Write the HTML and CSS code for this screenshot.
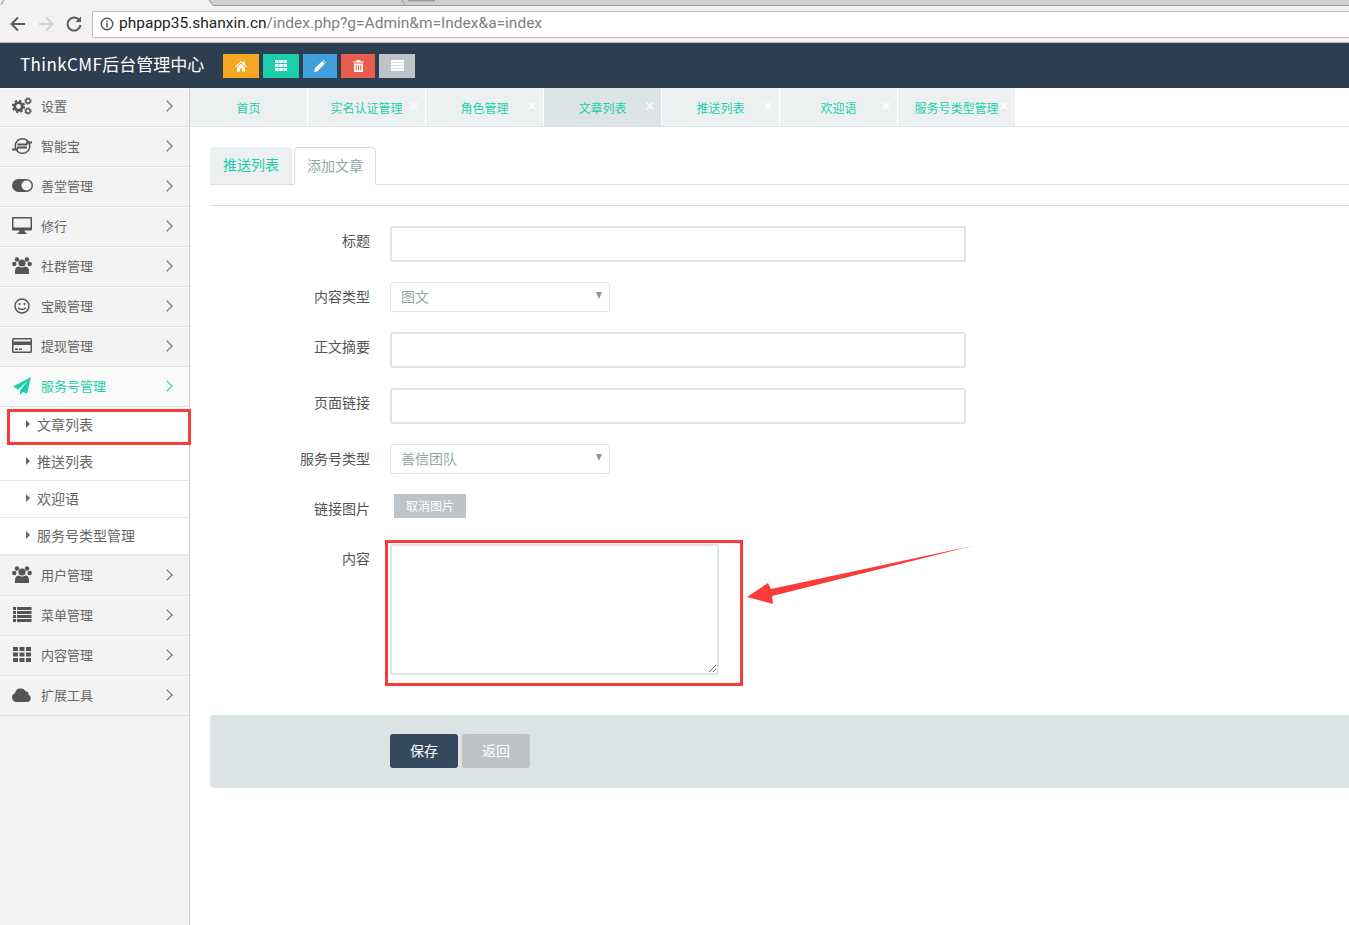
FILE: index.html
```html
<!DOCTYPE html>
<html lang="zh-CN">
<head>
    <meta charset="UTF-8">
    <title>ThinkCMF后台管理中心</title>
    <link rel="stylesheet" href="styles.css">
</head>
<body>
    <!-- Browser toolbar -->
    <div class="chrome">
        <svg class="chrome-tabs" width="1349" height="6" viewBox="0 0 1349 6">
            <path d="M209 0h1140v5H213z" fill="#cfcfcf"/>
            <path d="M209 0l4 5.500h1136M402 0l3 5.500" fill="none" stroke="#9a9a9a"/>
            <path d="M408 0h27v1.500h-27z" fill="#9a9a9a"/>
            <path d="M0 4 3 0h2L2 5z" fill="#bbb"/>
        </svg>
        <div class="chrome-bar">
            <svg class="chrome-btn" width="18" height="18" viewBox="0 0 18 18"><path d="M16 9H3M9 2.500 2.500 9 9 15.500" fill="none" stroke="#5a5a5a" stroke-width="2"/></svg>
            <svg class="chrome-btn" width="18" height="18" viewBox="0 0 18 18"><path d="M2 9h13M9 2.500 15.500 9 9 15.500" fill="none" stroke="#d2d2d2" stroke-width="2"/></svg>
            <svg class="chrome-btn" width="18" height="18" viewBox="0 0 18 18"><path d="M14.500 5.500A6.500 6.500 0 1 0 15.500 10" fill="none" stroke="#5a5a5a" stroke-width="2"/><path d="M16 1.500V7h-5.500z" fill="#5a5a5a"/></svg>
            <div class="url-box">
                <svg width="14" height="14" viewBox="0 0 14 14"><circle cx="7" cy="7" r="5.800" fill="none" stroke="#555" stroke-width="1.400"/><path d="M7 6v4.500M7 3.500v1.500" stroke="#555" stroke-width="1.500"/></svg>
                <span class="url-host">phpapp35.shanxin.cn</span><span class="url-path">/index.php?g=Admin&amp;m=Index&amp;a=index</span>
            </div>
        </div>
    </div>

    <!-- Top navbar -->
    <div class="navbar">
        <div class="brand"><span class="brand-latin">ThinkCMF</span>后台管理中心</div>
        <div class="quick-btns">
            <a class="quick orange"><svg width="12" height="12" viewBox="0 0 12 12"><path d="M6 1 0 6.500l.7.800L6 2.600l5.300 4.700.7-.8-2-1.800V1.500H8.500v1.300zM2 7.500V11.500h3v-3h2v3h3V7.500L6 3.800z" fill="#fff"/></svg></a>
            <a class="quick green"><svg width="12" height="11" viewBox="0 0 12 11"><path d="M0 0h3.500v3H0zM4.200 0h3.600v3H4.200zM8.500 0H12v3H8.500zM0 4h3.500v3H0zM4.200 4h3.600v3H4.200zM8.500 4H12v3H8.500zM0 8h3.500v3H0zM4.200 8h3.600v3H4.200zM8.500 8H12v3H8.500z" fill="#fff"/></svg></a>
            <a class="quick blue"><svg width="12" height="12" viewBox="0 0 12 12"><path d="M0 12l.8-3.500L8 1.300l2.700 2.700L3.500 11.200zM8.800.6l.6-.6 2.600 2.600-.6.700z" fill="#fff"/></svg></a>
            <a class="quick red"><svg width="11" height="12" viewBox="0 0 11 12"><path d="M4 0h3l1 1.500h3v1H0v-1h3zM1 3.500h9V12H1zM2.800 5v5.500h1V5zM5 5v5.500h1V5zM7.200 5v5.500h1V5z" fill="#fff" fill-rule="evenodd"/></svg></a>
            <a class="quick gray"><svg width="13" height="11" viewBox="0 0 13 11"><path d="M0 0h13v2.400H0zM0 3h13v2.400H0zM0 6h13v2.200H0zM0 8.800h13V11H0z" fill="#fff"/></svg></a>
        </div>
    </div>

    <div class="layout">
        <!-- Sidebar menu -->
        <div class="sidebar">
            <div class="menu-item first">
                <svg class="menu-icon" width="20" height="18" viewBox="0 0 20 18"><circle cx="6.500" cy="9.500" r="3.800" fill="none" stroke="#555" stroke-width="2.800"/><circle cx="6.500" cy="9.500" r="5.800" fill="none" stroke="#555" stroke-width="1.800" stroke-dasharray="2.300 2.250"/><circle cx="16" cy="4" r="2.200" fill="none" stroke="#555" stroke-width="1.500"/><circle cx="16" cy="4" r="3.300" fill="none" stroke="#555" stroke-width=".9" stroke-dasharray="1.300 1.300"/><circle cx="16" cy="14" r="2.200" fill="none" stroke="#555" stroke-width="1.500"/><circle cx="16" cy="14" r="3.300" fill="none" stroke="#555" stroke-width=".9" stroke-dasharray="1.300 1.300"/></svg>
                <span>设置</span><i class="chev"></i>
            </div>
            <div class="menu-item">
                <svg class="menu-icon" width="20" height="18" viewBox="0 0 20 18"><circle cx="10.500" cy="9" r="7.300" fill="none" stroke="#555" stroke-width="1.500"/><path d="M0 12.500h6M14 5.500h6M5.500 7.500h10M5 10.500h10" stroke="#555" stroke-width="1.800"/></svg>
                <span>智能宝</span><i class="chev"></i>
            </div>
            <div class="menu-item">
                <svg class="menu-icon toggle" width="21" height="13" viewBox="0 0 21 13"><rect width="21" height="13" rx="6.500" fill="#555"/><circle cx="14.500" cy="6.500" r="5" fill="#f3f3f3"/></svg>
                <span>善堂管理</span><i class="chev"></i>
            </div>
            <div class="menu-item">
                <svg class="menu-icon" width="20" height="17" viewBox="0 0 20 17"><path d="M1 0h18a1 1 0 0 1 1 1v11.500a1 1 0 0 1-1 1h-6.500l.5 2h1.500v1.500h-9V15.500H7l.5-2H1a1 1 0 0 1-1-1V1a1 1 0 0 1 1-1zM1.500 1.500v9h17v-9z" fill="#555" fill-rule="evenodd"/></svg>
                <span>修行</span><i class="chev"></i>
            </div>
            <div class="menu-item">
                <svg class="menu-icon" width="20" height="17" viewBox="0 0 20 17"><circle cx="10" cy="6" r="3.600" fill="#555"/><circle cx="5" cy="2.500" r="2.200" fill="#555"/><circle cx="15" cy="2.500" r="2.200" fill="#555"/><circle cx="2.300" cy="7" r="2.200" fill="#555"/><circle cx="17.700" cy="7" r="2.200" fill="#555"/><path d="M3 17v-3q0-4 3.500-4.500 3.500 2 7 0Q17 10 17 14v3z" fill="#555"/></svg>
                <span>社群管理</span><i class="chev"></i>
            </div>
            <div class="menu-item">
                <svg class="menu-icon" width="20" height="16" viewBox="0 0 20 16"><circle cx="10" cy="8" r="7" fill="none" stroke="#555" stroke-width="1.500"/><circle cx="7.500" cy="6" r="1.100" fill="#555"/><circle cx="12.500" cy="6" r="1.100" fill="#555"/><path d="M6 9.800q4 3.400 8 0" fill="none" stroke="#555" stroke-width="1.300"/></svg>
                <span>宝殿管理</span><i class="chev"></i>
            </div>
            <div class="menu-item">
                <svg class="menu-icon" width="20" height="15" viewBox="0 0 20 15"><path d="M1.500 0h17A1.500 1.500 0 0 1 20 1.500v12a1.500 1.500 0 0 1-1.500 1.500h-17A1.500 1.500 0 0 1 0 13.500v-12A1.500 1.500 0 0 1 1.500 0zM1.500 1.500V3.500h17V1.500zM1.500 7v6.500h17V7zM3 10.500h3V12H3zM7 10.500h3V12H7z" fill="#555" fill-rule="evenodd"/></svg>
                <span>提现管理</span><i class="chev"></i>
            </div>
            <div class="menu-item active">
                <svg class="menu-icon" width="20" height="18" viewBox="0 0 20 18"><path d="M19 0 1 9.500l5 3L15.500 4 8 13.500 8 18l3-3 4 1.800z" fill="#1ccfab"/></svg>
                <span>服务号管理</span><i class="chev"></i>
            </div>
            <div class="sub-item"><i class="caret"></i>文章列表</div>
            <div class="sub-item"><i class="caret"></i>推送列表</div>
            <div class="sub-item"><i class="caret"></i>欢迎语</div>
            <div class="sub-item last"><i class="caret"></i>服务号类型管理</div>
            <div class="menu-item">
                <svg class="menu-icon" width="20" height="17" viewBox="0 0 20 17"><circle cx="10" cy="6" r="3.600" fill="#555"/><circle cx="5" cy="2.500" r="2.200" fill="#555"/><circle cx="15" cy="2.500" r="2.200" fill="#555"/><circle cx="2.300" cy="7" r="2.200" fill="#555"/><circle cx="17.700" cy="7" r="2.200" fill="#555"/><path d="M3 17v-3q0-4 3.500-4.500 3.500 2 7 0Q17 10 17 14v3z" fill="#555"/></svg>
                <span>用户管理</span><i class="chev"></i>
            </div>
            <div class="menu-item">
                <svg class="menu-icon" width="20" height="15" viewBox="0 0 20 15"><path d="M1 0h3v3H1zM5 0h14.500v3H5zM1 4h3v3H1zM5 4h14.500v3H5zM1 8h3v3H1zM5 8h14.500v3H5zM1 12h3v3H1zM5 12h14.500v3H5z" fill="#555"/></svg>
                <span>菜单管理</span><i class="chev"></i>
            </div>
            <div class="menu-item">
                <svg class="menu-icon" width="20" height="15" viewBox="0 0 20 15"><path d="M1 0h5v4H1zM7.500 0h5v4h-5zM14 0h5v4h-5zM1 5.500h5v4H1zM7.500 5.500h5v4h-5zM14 5.500h5v4h-5zM1 11h5v4H1zM7.500 11h5v4h-5zM14 11h5v4h-5z" fill="#555"/></svg>
                <span>内容管理</span><i class="chev"></i>
            </div>
            <div class="menu-item">
                <svg class="menu-icon" width="20" height="15" viewBox="0 0 20 15"><path d="M4.500 15A4.500 4.500 0 0 1 3 6.300 5.800 5.800 0 0 1 13.800 4.400 3 3 0 0 1 16.500 7.800 3.800 3.800 0 0 1 15.800 15z" fill="#555"/></svg>
                <span>扩展工具</span><i class="chev"></i>
            </div>
        </div>

        <!-- Main content -->
        <div class="main">
            <div class="page-tabs">
                <div class="page-tab">首页</div>
                <div class="page-tab">实名认证管理<b class="close">×</b></div>
                <div class="page-tab">角色管理<b class="close">×</b></div>
                <div class="page-tab current">文章列表<b class="close">×</b></div>
                <div class="page-tab">推送列表<b class="close">×</b></div>
                <div class="page-tab">欢迎语<b class="close">×</b></div>
                <div class="page-tab">服务号类型管理<b class="close">×</b></div>
            </div>

            <div class="content">
                <div class="nav-tabs">
                    <div class="nav-tab">推送列表</div>
                    <div class="nav-tab selected">添加文章</div>
                </div>
                <hr class="divider">

                <div class="form-row">
                    <label>标题</label>
                    <div class="input wide"></div>
                </div>
                <div class="form-row">
                    <label>内容类型</label>
                    <div class="select">图文<i class="select-arrow"></i></div>
                </div>
                <div class="form-row">
                    <label>正文摘要</label>
                    <div class="input wide"></div>
                </div>
                <div class="form-row">
                    <label>页面链接</label>
                    <div class="input wide"></div>
                </div>
                <div class="form-row">
                    <label>服务号类型</label>
                    <div class="select">善信团队<i class="select-arrow"></i></div>
                </div>
                <div class="form-row image-row">
                    <label>链接图片</label>
                    <a class="btn-small">取消图片</a>
                </div>
                <div class="form-row">
                    <label>内容</label>
                    <textarea class="textarea"></textarea>
                </div>

                <div class="form-actions">
                    <a class="btn primary">保存</a>
                    <a class="btn default">返回</a>
                </div>
            </div>
        </div>
    </div>

    <!-- Red annotations drawn over the screenshot -->
    <div class="mark mark-menu"></div>
    <div class="mark mark-textarea"></div>
    <svg class="mark-arrow" width="240" height="70" viewBox="0 0 240 70">
        <path d="M3 57 24 43 27 49 228 6 28 56 29 64z" fill="#fb3a3a"/>
    </svg>
</body>
</html>
```

FILE: styles.css
```css
* {
    box-sizing: border-box;
}

html, body {
    height: 925px;
    overflow: hidden;
}

body {
    margin: 0;
    background-color: #fff;
    font-family: "Noto Sans CJK SC", "Liberation Sans", sans-serif;
    font-size: 14px;
    color: #555;
    position: relative;
}

/* browser toolbar */
.chrome {
    height: 43px;
    background-color: #f2f2f2;
    border-bottom: 1px solid #b8b8b8;
}

.chrome-tabs {
    display: block;
    height: 6px;
}

.chrome-bar {
    display: flex;
    align-items: center;
    height: 36px;
    padding-left: 9px;
}

.chrome-btn {
    margin-right: 10px;
    flex: none;
}

.url-box {
    display: flex;
    align-items: center;
    flex: 1;
    height: 27px;
    margin-left: -1px;
    padding: 0 0 2px 7px;
    background-color: #fff;
    border: 1px solid #bdbdbd;
    border-right: 0;
    border-radius: 2px 0 0 2px;
    font-family: Roboto, sans-serif;
    font-size: 15.500px;
    white-space: nowrap;
}

.url-box svg {
    margin: 2px 5px 0 0;
}

.url-host {
    color: #222;
}

.url-path {
    color: #808080;
}

/* navbar */
.navbar {
    display: flex;
    align-items: center;
    height: 45px;
    padding-left: 20px;
    background-color: #2c3e50;
}

.brand {
    width: 203px;
    padding-bottom: 4px;
    color: #fff;
    font-size: 17px;
    white-space: nowrap;
}

.brand-latin {
    letter-spacing: .4px;
}

.quick-btns {
    display: flex;
    gap: 4px;
}

.quick {
    display: flex;
    align-items: center;
    justify-content: center;
    width: 36px;
    height: 24px;
}

.orange { background-color: #f5a623; }
.green { background-color: #1ccfab; width: 36px; }
.blue { background-color: #429fdc; width: 34px; }
.red { background-color: #e95d4f; width: 34px; }
.gray { background-color: #bdc3c7; }

/* page body */
.layout {
    display: flex;
    height: 837px;
}

.sidebar {
    width: 190px;
    flex: none;
    background-color: #f3f3f3;
    border-right: 1px solid #ccc;
}

.menu-item {
    display: flex;
    align-items: center;
    height: 40px;
    padding: 0 16px 2px 12px;
    border-bottom: 1px solid #e2e2e2;
    box-shadow: inset 0 1px 0 #fafafa;
    color: #666;
    font-size: 13px;
}

.menu-item.first {
    height: 39px;
}

.menu-item span {
    flex: 1;
}

.menu-item.first span {
    margin-bottom: 2px;
}

.menu-icon {
    flex: none;
    margin-right: 9px;
}

.menu-icon.toggle {
    margin-right: 8px;
}

.chev {
    width: 8px;
    height: 8px;
    margin-right: 2px;
    border-top: 1.500px solid #666;
    border-right: 1.500px solid #666;
    transform: rotate(45deg);
}

.menu-item.active {
    background-color: #fafafa;
    color: #1ccfab;
}

.menu-item.active .chev {
    border-color: #1ccfab;
}

.sub-item {
    display: flex;
    align-items: center;
    height: 37px;
    padding: 0 0 2px 26px;
    background-color: #fff;
    border-bottom: 1px solid #e6e6e6;
    color: #666;
    font-size: 14px;
}

.sub-item.last {
    height: 38px;
    border-bottom: 2px solid #e6e6e6;
}

.caret {
    width: 0;
    height: 0;
    margin-right: 7px;
    border-left: 4px solid #666;
    border-top: 4px solid transparent;
    border-bottom: 4px solid transparent;
}

.main {
    flex: 1;
    min-width: 0;
}

/* open page tabs */
.page-tabs {
    display: flex;
    height: 39px;
    border-bottom: 1px solid #e3e3e3;
}

.page-tab {
    position: relative;
    display: flex;
    align-items: center;
    justify-content: center;
    width: 118px;
    padding-top: 1px;
    background-color: #ecf0f1;
    border-right: 1px solid #fff;
    color: #1ccfab;
    font-size: 12px;
    white-space: nowrap;
}

.page-tab.current {
    background-color: #dce4e6;
}

.close {
    position: absolute;
    top: 9px;
    right: 7px;
    color: #fff;
    font-size: 14px;
    line-height: 18px;
    font-weight: 700;
    font-family: "Liberation Sans", sans-serif;
}

.content {
    padding: 20px 0 20px 20px;
}

/* inner tabs */
.nav-tabs {
    display: flex;
    gap: 2px;
    height: 38px;
    border-bottom: 1px solid #ddd;
}

.nav-tab {
    display: flex;
    align-items: center;
    justify-content: center;
    width: 82px;
    height: 37px;
    padding-bottom: 3px;
    background-color: #ecf0f1;
    border-radius: 4px 4px 0 0;
    color: #1ccfab;
    font-size: 14px;
}

.nav-tab.selected {
    height: 38px;
    background-color: #fff;
    border: 1px solid #ddd;
    border-bottom-color: #fff;
    color: #95a5a6;
}

.divider {
    height: 1px;
    margin: 20px 0 20px;
    border: 0;
    background-color: #ddd;
}

/* form */
.form-row {
    display: flex;
    align-items: flex-start;
    gap: 20px;
    margin-bottom: 20px;
}

.form-row label {
    width: 160px;
    flex: none;
    padding-top: 4px;
    line-height: 20px;
    text-align: right;
    color: #555;
    font-size: 14px;
}

.input {
    height: 36px;
    border: 2px solid #dce4ec;
    border-radius: 3px;
    background-color: #fff;
}

.input.wide {
    width: 576px;
}

.select {
    position: relative;
    width: 220px;
    height: 30px;
    padding-left: 10px;
    border: 1px solid #dce4ec;
    border-radius: 3px;
    line-height: 27px;
    color: #95a5a6;
    font-size: 14px;
}

.select-arrow {
    position: absolute;
    top: 9px;
    right: 7px;
    width: 0;
    height: 0;
    border-top: 7px solid #8c9a9b;
    border-left: 3px solid transparent;
    border-right: 3px solid transparent;
}

.image-row {
    margin-bottom: 26px;
}

.btn-small {
    width: 72px;
    height: 24px;
    margin-left: 4px;
    background-color: #bdc3c7;
    color: #fff;
    font-size: 12px;
    line-height: 24px;
    text-align: center;
}

.textarea {
    display: block;
    width: 329px;
    height: 131px;
    margin: 0;
    border: 2px solid #dce4ec;
    border-radius: 3px;
    outline: 0;
}

.form-actions {
    display: flex;
    gap: 4px;
    height: 73px;
    margin-top: 40px;
    padding: 19px 0 0 180px;
    background-color: #dce4e6;
    border-radius: 4px 0 0 4px;
}

.btn {
    width: 68px;
    height: 34px;
    border-radius: 3px;
    color: #fff;
    font-size: 14px;
    line-height: 32px;
    text-align: center;
}

.btn.primary {
    background-color: #34495e;
}

.btn.default {
    background-color: #bdc3c7;
}

/* annotations */
.mark {
    position: absolute;
    border: 3px solid #fb3a3a;
}

.mark-menu {
    left: 7px;
    top: 409px;
    width: 184px;
    height: 36px;
}

.mark-textarea {
    left: 385px;
    top: 540px;
    width: 358px;
    height: 146px;
}

.mark-arrow {
    position: absolute;
    left: 744px;
    top: 540px;
}
```
